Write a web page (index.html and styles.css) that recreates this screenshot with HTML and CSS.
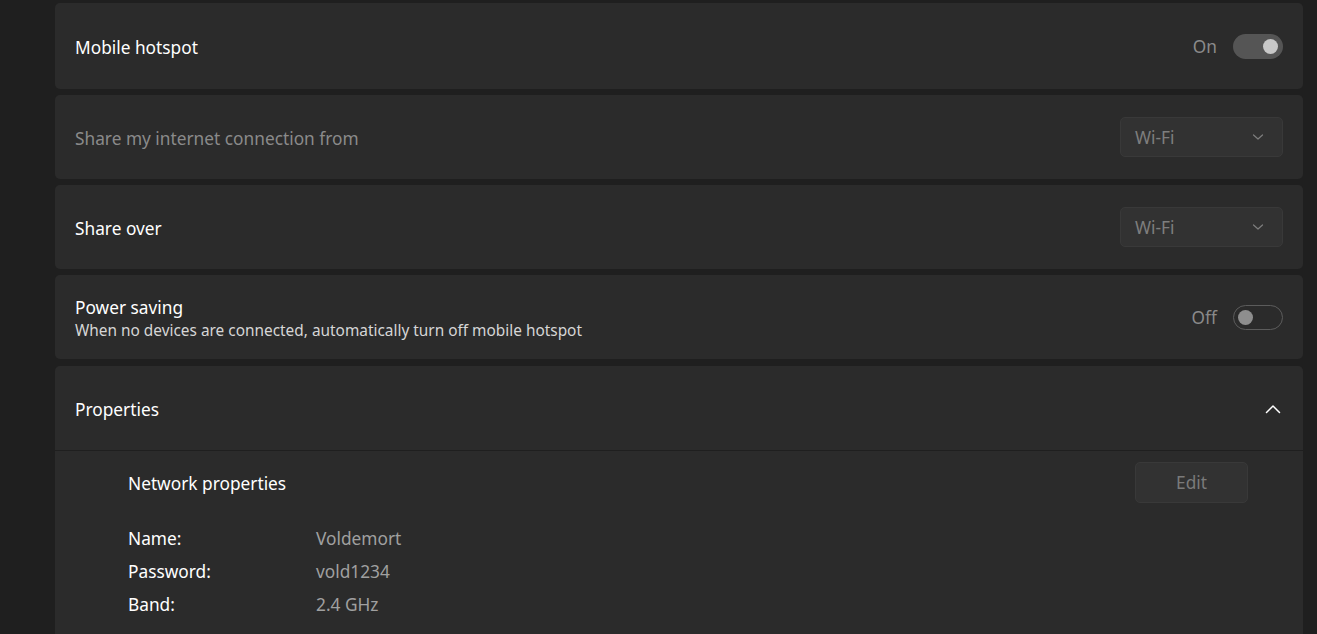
FILE: index.html
```html
<!DOCTYPE html>
<html>
<head>
<meta charset="utf-8">
<link rel="stylesheet" href="styles.css">
</head>
<body>
<div class="page">
  <div class="card row first">
    <span class="title">Mobile hotspot</span>
    <div class="ctrl">
      <span class="state">On</span>
      <span class="toggle on"><span class="knob"></span></span>
    </div>
  </div>
  <div class="card row">
    <span class="title disabled">Share my internet connection from</span>
    <div class="select"><span>Wi-Fi</span>
      <svg class="chev" width="12" height="8" viewBox="0 0 12 8"><path d="M1.5 2 L6 6 L10.5 2" fill="none" stroke="#7e7e7e" stroke-width="1.2" stroke-linecap="round" stroke-linejoin="round"/></svg>
    </div>
  </div>
  <div class="card row">
    <span class="title">Share over</span>
    <div class="select"><span>Wi-Fi</span>
      <svg class="chev" width="12" height="8" viewBox="0 0 12 8"><path d="M1.5 2 L6 6 L10.5 2" fill="none" stroke="#7e7e7e" stroke-width="1.2" stroke-linecap="round" stroke-linejoin="round"/></svg>
    </div>
  </div>
  <div class="card row">
    <div class="text">
      <span class="title">Power saving</span>
      <span class="sub">When no devices are connected, automatically turn off mobile hotspot</span>
    </div>
    <div class="ctrl">
      <span class="state">Off</span>
      <span class="toggle off"><span class="knob"></span></span>
    </div>
  </div>
  <div class="card expander">
    <div class="exp-head">
      <span class="title">Properties</span>
      <svg class="up" width="16" height="10" viewBox="0 0 16 10"><path d="M1.5 8.5 L8 2 L14.5 8.5" fill="none" stroke="#ffffff" stroke-width="1.5" stroke-linecap="round" stroke-linejoin="round"/></svg>
    </div>
    <div class="exp-body">
      <div class="np-head">
        <span class="np-title">Network properties</span>
        <span class="btn">Edit</span>
      </div>
      <div class="props">
        <span class="k">Name:</span><span class="v">Voldemort</span>
        <span class="k">Password:</span><span class="v">vold1234</span>
        <span class="k">Band:</span><span class="v">2.4 GHz</span>
      </div>
    </div>
  </div>
</div>
</body>
</html>
```

FILE: styles.css
```css
html, body {
  margin: 0;
  padding: 0;
  background: #1f1f1f;
  width: 1317px;
  height: 634px;
  overflow: hidden;
  font-family: "Noto Sans", "Open Sans", sans-serif;
  color: #ffffff;
}

.page {
  display: flex;
  flex-direction: column;
  gap: 6px;
  padding: 3px 14px 0 55px;
}

.card {
  background: #2b2b2b;
  border-radius: 5px;
}

.row {
  height: 84px;
  display: flex;
  align-items: center;
  justify-content: space-between;
  padding: 0 20px;
  box-sizing: border-box;
}

.row.first {
  height: 86px;
}

.row > .title,
.row > .text {
  padding-top: 2px;
}

.title {
  font-size: 17.3px;
  color: #ffffff;
}

.title.disabled {
  color: #8a8a8a;
}

.text {
  display: flex;
  flex-direction: column;
  gap: 1px;
}

.sub {
  font-size: 15.4px;
  color: #d6d6d6;
}

.ctrl {
  display: flex;
  align-items: center;
  gap: 16px;
}

.state {
  font-size: 17.3px;
  color: #8a8a8a;
  padding-top: 1px;
}

.toggle {
  width: 50px;
  height: 25px;
  border-radius: 13px;
  box-sizing: border-box;
  display: flex;
  align-items: center;
  padding: 0 5px;
}

.toggle.on {
  background: #555555;
  justify-content: flex-end;
}

.toggle.off {
  border: 1px solid #5c5c5c;
  justify-content: flex-start;
  padding: 0 4px;
}

.knob {
  width: 15px;
  height: 15px;
  border-radius: 50%;
}

.toggle.on .knob {
  background: #c8c8c8;
}

.toggle.off .knob {
  background: #8e8e8e;
}

.select {
  width: 163px;
  height: 40px;
  box-sizing: border-box;
  background: #323232;
  border: 1px solid #393939;
  border-radius: 5px;
  display: flex;
  align-items: center;
  justify-content: space-between;
  padding: 0 18px 0 14px;
  font-size: 17.3px;
  color: #7e7e7e;
}

.expander {
  border-radius: 5px 5px 0 0;
  flex: 1;
  margin-top: 1px;
}

.exp-head {
  height: 85px;
  display: flex;
  align-items: center;
  justify-content: space-between;
  padding: 2px 22px 0 20px;
  box-sizing: border-box;
  border-bottom: 1px solid #1f1f1f;
}

.exp-body {
  padding: 11px 55px 40px 73px;
}

.np-head {
  display: flex;
  align-items: center;
  justify-content: space-between;
}

.np-title {
  font-size: 17.3px;
  color: #ffffff;
  padding-top: 2px;
}

.btn {
  width: 113px;
  height: 41px;
  box-sizing: border-box;
  background: #323232;
  border: 1px solid #393939;
  border-radius: 5px;
  display: flex;
  align-items: center;
  justify-content: center;
  font-size: 17.3px;
  color: #7a7a7a;
}

.props {
  display: grid;
  grid-template-columns: 188px 1fr;
  grid-auto-rows: 33px;
  align-items: center;
  margin-top: 19px;
  font-size: 17.3px;
}

.k {
  color: #ffffff;
}

.v {
  color: #a0a0a0;
}
```
